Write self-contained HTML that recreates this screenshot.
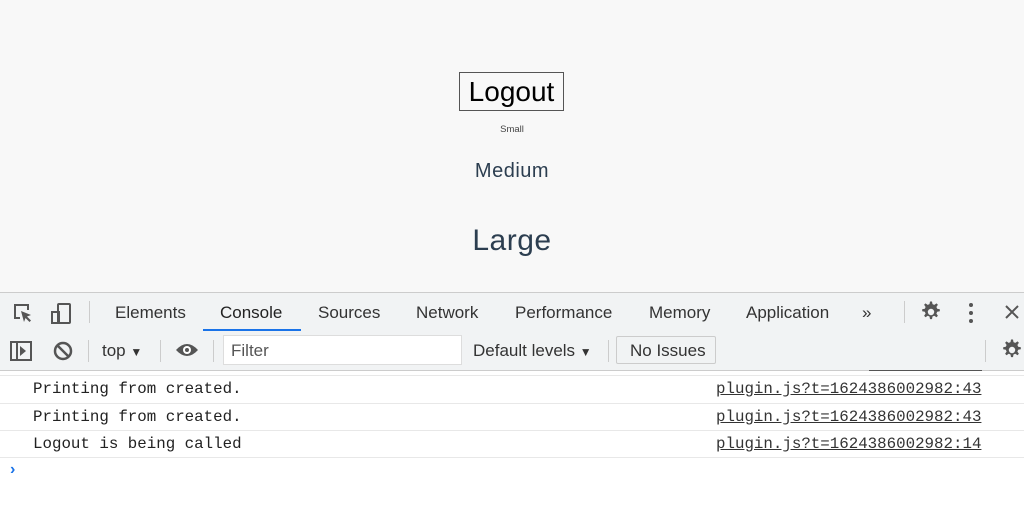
<!DOCTYPE html>
<html><head><style>
body{margin:0;width:1024px;height:509px;overflow:hidden;font-family:"Liberation Sans",sans-serif;background:#fff;position:relative}
.top{position:absolute;left:0;top:0;width:1024px;height:292px;background:#f8f8f8;color:#2c3e50;text-align:center}
.btn{position:absolute;left:459px;top:72px;width:103px;height:37px;border:1px solid #555;background:#f8f8f8;color:#000;font-size:28px;line-height:37px}
.t{position:absolute;width:1024px;left:0}
.bar{position:absolute;left:0;width:1024px;background:#f1f3f4;color:#333;font-size:17px}
.tab{position:absolute;top:10px}
.m{font-family:"Liberation Mono",monospace;font-size:15.8px;color:#222;position:absolute}
.l{position:absolute;left:716px;text-decoration:underline;font-family:"Liberation Mono",monospace;font-size:15.8px;color:#333}
.sep{position:absolute;left:0;width:1024px;height:1px;background:#e8e8e8}
.vs{position:absolute;width:1px;background:#ccc}
</style></head><body>
<svg width="0" height="0" style="position:absolute"><defs><g id="gear"><path d="M11 1.5l2 0 .5 2.6 1.8.8 2.2-1.5 1.4 1.4-1.5 2.2.8 1.8 2.6.5v2l-2.6.5-.8 1.8 1.5 2.2-1.4 1.4-2.2-1.5-1.8.8-.5 2.6h-2l-.5-2.6-1.8-.8-2.2 1.5-1.4-1.4 1.5-2.2-.8-1.8-2.6-.5v-2l2.6-.5.8-1.8-1.5-2.2 1.4-1.4 2.2 1.5 1.8-.8z" fill="#555"/><circle cx="12" cy="12" r="3.2" fill="#f1f3f4"/></g></defs></svg>
<div class="top">
<div class="btn">Logout</div>
<div class="t" style="top:124px;font-size:9.5px;color:#444">Small</div>
<div class="t" style="top:160px;font-size:20px;letter-spacing:0.5px">Medium</div>
<div class="t" style="top:224px;font-size:30px;letter-spacing:0.5px">Large</div>
</div>
<div class="bar" style="top:292px;height:38px;border-top:1px solid #ccc;border-bottom:1px solid #ccc">
<svg style="position:absolute;left:12px;top:9px" width="22" height="22" viewBox="0 0 22 22" fill="none" stroke="#555" stroke-width="2"><path d="M8 16H3V3h13v5"/><path d="M9 9l10 4-4 1.5 4 4-1.5 1.5-4-4L12 20z" fill="#555" stroke="none"/></svg>
<svg style="position:absolute;left:50px;top:9px" width="22" height="22" viewBox="0 0 22 22" fill="none" stroke="#555" stroke-width="2"><rect x="8" y="2" width="12" height="19" rx="1"/><rect x="2" y="10" width="7" height="11"/></svg>
<div class="vs" style="left:89px;top:8px;height:22px"></div>
<span class="tab" style="left:115px">Elements</span>
<span class="tab" style="left:220px;color:#222">Console</span>
<div style="position:absolute;left:203px;top:36px;width:98px;height:2px;background:#1a73e8"></div>
<span class="tab" style="left:318px">Sources</span>
<span class="tab" style="left:416px">Network</span>
<span class="tab" style="left:515px">Performance</span>
<span class="tab" style="left:649px">Memory</span>
<span class="tab" style="left:746px">Application</span>
<span class="tab" style="left:862px">»</span>
<div class="vs" style="left:904px;top:8px;height:22px"></div>
<svg style="position:absolute;left:919px;top:7px" width="24" height="24" viewBox="0 0 24 24"><use href="#gear"/></svg>
<svg style="position:absolute;left:968px;top:9px" width="6" height="22" viewBox="0 0 6 22" fill="#555"><circle cx="3" cy="3" r="2"/><circle cx="3" cy="11" r="2"/><circle cx="3" cy="19" r="2"/></svg>
<svg style="position:absolute;left:1004px;top:11px" width="16" height="16" viewBox="0 0 16 16" stroke="#555" stroke-width="2"><path d="M2 2l12 12M14 2L2 14"/></svg>
</div>
<div class="bar" style="top:331px;height:39px;border-bottom:1px solid #ccc">
<svg style="position:absolute;left:10px;top:10px" width="22" height="20" viewBox="0 0 22 20" fill="none" stroke="#555" stroke-width="2"><rect x="1" y="1" width="20" height="18"/><path d="M7 1v18"/><path d="M10 5l6 5-6 5z" fill="#555" stroke="none"/></svg>
<svg style="position:absolute;left:52px;top:9px" width="22" height="22" viewBox="0 0 22 22" fill="none" stroke="#555" stroke-width="2.5"><circle cx="11" cy="11" r="8"/><path d="M5.5 5.5l11 11"/></svg>
<div class="vs" style="left:88px;top:9px;height:22px"></div>
<span class="tab" style="left:102px">top <span style="font-size:12px">▼</span></span>
<div class="vs" style="left:160px;top:9px;height:22px"></div>
<svg style="position:absolute;left:175px;top:11px" width="24" height="16" viewBox="0 0 24 16"><path d="M1 8Q12 -4 23 8Q12 20 1 8z" fill="#555"/><circle cx="12" cy="8" r="4" fill="#fff"/><circle cx="12" cy="8" r="2" fill="#555"/></svg>
<div class="vs" style="left:213px;top:9px;height:22px"></div>
<div style="position:absolute;left:223px;top:4px;width:237px;height:28px;background:#fff;border:1px solid #ddd"><span style="position:absolute;left:7px;top:5px;color:#555">Filter</span></div>
<span class="tab" style="left:473px">Default levels <span style="font-size:12px">▼</span></span>
<div class="vs" style="left:608px;top:9px;height:22px"></div>
<div style="position:absolute;left:616px;top:5px;width:98px;height:26px;border:1px solid #ccc;border-radius:2px;background:#f1f3f4"><span style="position:absolute;left:13px;top:4px">No Issues</span></div>
<div class="vs" style="left:985px;top:9px;height:22px"></div>
<svg style="position:absolute;left:1000px;top:7px" width="24" height="24" viewBox="0 0 24 24"><use href="#gear"/></svg>
</div>
<div style="position:absolute;left:869px;top:370px;width:113px;height:1px;background:#555"></div>
<div class="sep" style="top:375px"></div>
<span class="m" style="left:33px;top:380px">Printing from created.</span><span class="l" style="top:380px">plugin.js?t=1624386002982:43</span>
<div class="sep" style="top:403px"></div>
<span class="m" style="left:33px;top:408px">Printing from created.</span><span class="l" style="top:408px">plugin.js?t=1624386002982:43</span>
<div class="sep" style="top:430px"></div>
<span class="m" style="left:33px;top:435px">Logout is being called</span><span class="l" style="top:435px">plugin.js?t=1624386002982:14</span>
<div class="sep" style="top:457px"></div>
<span style="position:absolute;left:10px;top:461px;color:#1a73e8;font-size:16px;font-weight:bold">›</span>
</body></html>
